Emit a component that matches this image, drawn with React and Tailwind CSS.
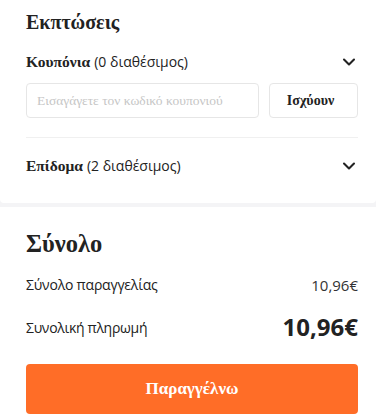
import { ChevronDown } from "lucide-react";

const serif = "font-['Liberation_Serif',serif]";
const sans = "font-['Open_Sans',sans-serif]";

function DiscountRow({ title, count }) {
  return (
    <div className="flex flex-row items-center justify-between">
      <span className={`text-[15.5px] text-[#222]`}>
        <span className={`${serif} font-bold`}>{title}</span>{" "}
        <span className={`${sans} text-[14px]`}>({count} διαθέσιμος)</span>
      </span>
      <ChevronDown className="w-5 h-5 text-[#222] -mr-[1px]" strokeWidth={2.5} />
    </div>
  );
}

export default function App() {
  return (
    <div className="w-[376px] h-[419px] bg-[#f4f4f6] overflow-hidden">
      {/* Discounts */}
      <div className="bg-white pl-[26px] pr-[18px] pt-[8px] pb-[25px] rounded-b-[4px]">
        <h2 className={`${serif} font-bold text-[20px] text-[#222] leading-[28px]`}>Εκπτώσεις</h2>
        <div className="mt-[14px]">
          <DiscountRow title="Κουπόνια" count={0} />
        </div>
        <div className="flex flex-row gap-[10px] mt-[10px]">
          <input
            className={`${serif} flex-1 min-w-0 h-[35px] border border-[#e6e6e6] rounded-[4px] px-[10px] text-[13.5px] text-[#222] placeholder:text-[#c6c6c6] outline-none`}
            placeholder="Εισαγάγετε τον κωδικό κουπονιού"
          />
          <button className={`${serif} w-[89px] h-[35px] border border-[#e6e6e6] rounded-[4px] font-bold text-[14px] text-[#222] bg-white pr-[6px]`}>
            Ισχύουν
          </button>
        </div>
        <div className="h-px bg-[#f0f0f0] mt-[19px]" />
        <div className="mt-[16px]">
          <DiscountRow title="Επίδομα" count={2} />
        </div>
      </div>

      {/* Total */}
      <div className="bg-white mt-[4px] pl-[26px] pr-[18px] pt-[22px] pb-[8px] h-[300px]">
        <h2 className={`${serif} font-bold text-[24.5px] text-[#222] leading-[30px]`}>Σύνολο</h2>
        <div className={`${sans} flex flex-row justify-between items-center mt-[15px] text-[14px] text-[#222]`}>
          <span className="tracking-[-0.2px]">Σύνολο παραγγελίας</span>
          <span className="text-[15px] text-[#333]">10,96€</span>
        </div>
        <div className={`${sans} flex flex-row justify-between items-center mt-[15px] text-[14px] text-[#222]`}>
          <span className="tracking-[-0.3px]">Συνολική πληρωμή</span>
          <span className="text-[24px] font-bold text-[#222] leading-[32px]">10,96€</span>
        </div>
        <button className={`${serif} mt-[21px] w-full h-[50px] rounded-[4px] bg-[#ff6d27] text-white font-bold text-[17px]`}>
          Παραγγέλνω
        </button>
      </div>
    </div>
  );
}
